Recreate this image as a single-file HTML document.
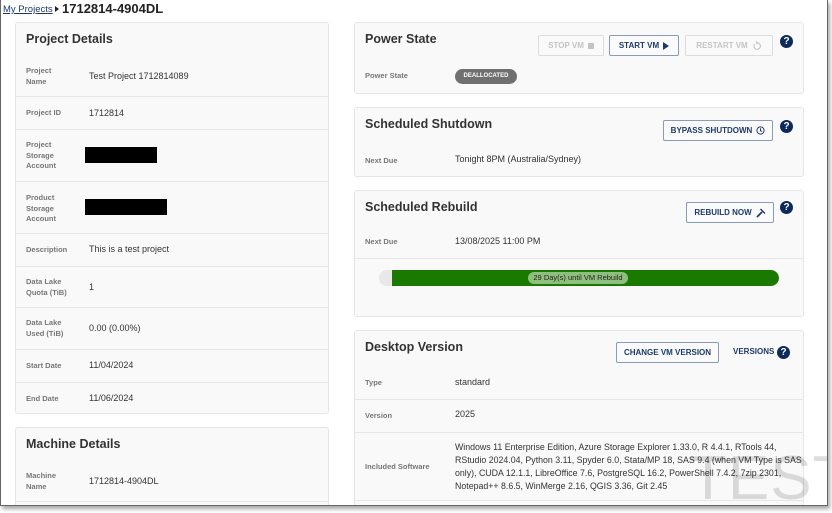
<!DOCTYPE html>
<html><head><meta charset="utf-8"><style>
*{box-sizing:border-box;margin:0;padding:0}
body{width:832px;height:513px;background:#fff;font-family:"Liberation Sans",sans-serif;position:relative;overflow:hidden;color:#222}
.win{position:absolute;left:0;top:0;width:828px;height:506px;border:1px solid #666;border-top:none;background:#fff;box-shadow:2px 3px 4px rgba(0,0,0,.35);overflow:hidden}
.a{position:absolute}
.card{position:absolute;background:#f9f9f9;border:1px solid #e6e6e6;border-radius:3px}
.h{position:absolute;font-size:12.5px;font-weight:bold;color:#333}
.lb{position:absolute;font-size:7.5px;font-weight:bold;color:#777;line-height:10.5px}
.v{position:absolute;font-size:9px;color:#333}
.hr{position:absolute;left:0;right:0;height:1px;background:#e6e6e6}
.btn{position:absolute;border:1px solid #8a9bb5;border-radius:2px;font-size:8px;font-weight:bold;color:#1e3a6b;display:flex;align-items:center;justify-content:center;gap:4px;background:#fafafa}
.dis{border-color:#ddd;color:#c4c4c4}
.q{position:absolute;width:13px;height:13px;border-radius:50%;background:#0d2a5c;color:#fff;font-size:10px;font-weight:bold;text-align:center;line-height:13px}
</style></head><body>
<div class="win">
<div class="a" style="left:2px;top:4px;font-size:9.5px;color:#1e3a6b;text-decoration:underline">My Projects</div>
<div class="a" style="left:54px;top:6px;width:0;height:0;border-left:4px solid #222;border-top:3px solid transparent;border-bottom:3px solid transparent"></div>
<div class="a" style="left:61px;top:1px;font-size:13px;font-weight:bold;color:#222">1712814-4904DL</div>

<div class="card" style="left:14px;top:22px;width:314px;height:392px">
<div class="h" style="left:10px;top:9px">Project Details</div>
<div class="lb" style="left:10px;top:43px">Project<br>Name</div><div class="v" style="left:73px;top:48px">Test Project 1712814089</div>
<div class="hr" style="top:73px"></div>
<div class="lb" style="left:10px;top:85px">Project ID</div><div class="v" style="left:73px;top:85px">1712814</div>
<div class="hr" style="top:106px"></div>
<div class="lb" style="left:10px;top:117px">Project<br>Storage<br>Account</div><div class="a" style="left:69px;top:124px;width:72px;height:16px;background:#000"></div>
<div class="hr" style="top:158px"></div>
<div class="lb" style="left:10px;top:170px">Product<br>Storage<br>Account</div><div class="a" style="left:69px;top:176px;width:82px;height:16px;background:#000"></div>
<div class="hr" style="top:210px"></div>
<div class="lb" style="left:10px;top:222px">Description</div><div class="v" style="left:73px;top:221px">This is a test project</div>
<div class="hr" style="top:243px"></div>
<div class="lb" style="left:10px;top:254px">Data Lake<br>Quota (TiB)</div><div class="v" style="left:73px;top:259px">1</div>
<div class="hr" style="top:284px"></div>
<div class="lb" style="left:10px;top:295px">Data Lake<br>Used (TiB)</div><div class="v" style="left:73px;top:300px">0.00 (0.00%)</div>
<div class="hr" style="top:326px"></div>
<div class="lb" style="left:10px;top:338px">Start Date</div><div class="v" style="left:73px;top:337px">11/04/2024</div>
<div class="hr" style="top:359px"></div>
<div class="lb" style="left:10px;top:371px">End Date</div><div class="v" style="left:73px;top:370px">11/06/2024</div>
</div>

<div class="card" style="left:14px;top:427px;width:314px;height:100px">
<div class="h" style="left:10px;top:9px">Machine Details</div>
<div class="lb" style="left:10px;top:43px">Machine<br>Name</div><div class="v" style="left:73px;top:48px">1712814-4904DL</div>
<div class="hr" style="top:73px"></div>
</div>

<div class="card" style="left:353px;top:22px;width:450px;height:72px">
<div class="h" style="left:10px;top:9px">Power State</div>
<div class="btn dis" style="left:183px;top:12px;width:66px;height:21px">STOP VM <span style="width:6px;height:6px;background:#c4c4c4;display:inline-block"></span></div>
<div class="btn" style="left:254px;top:12px;width:70px;height:21px">START VM <span style="width:0;height:0;border-left:6px solid #1e3a6b;border-top:4px solid transparent;border-bottom:4px solid transparent;display:inline-block"></span></div>
<div class="btn dis" style="left:330px;top:12px;width:88px;height:21px">RESTART VM <svg width="10" height="10" viewBox="0 0 10 10"><path d="M2.5 3A3.3 3.3 0 1 0 5 1.7" fill="none" stroke="#c4c4c4" stroke-width="1.1"/><path d="M4.2 0.3L5.6 1.7L4.2 3.1" fill="none" stroke="#c4c4c4" stroke-width="1.1"/></svg></div>
<div class="q" style="left:425px;top:12px">?</div>
<div class="lb" style="left:10px;top:48px">Power State</div>
<div class="a" style="left:100px;top:46px;width:62px;height:15px;border-radius:8px;background:#707070;color:#fff;font-size:6px;font-weight:bold;text-align:center;line-height:15px">DEALLOCATED</div>
</div>

<div class="card" style="left:353px;top:107px;width:450px;height:70px">
<div class="h" style="left:10px;top:9px">Scheduled Shutdown</div>
<div class="btn" style="left:308px;top:12px;width:110px;height:21px">BYPASS SHUTDOWN <svg width="9" height="9" viewBox="0 0 10 10"><circle cx="5" cy="5" r="4" fill="none" stroke="#1e3a6b" stroke-width="1.1"/><path d="M5 2.5V5.2L6.8 6" fill="none" stroke="#1e3a6b" stroke-width="1.1"/></svg></div>
<div class="q" style="left:425px;top:12px">?</div>
<div class="lb" style="left:10px;top:48px">Next Due</div>
<div class="v" style="left:100px;top:46px">Tonight 8PM (Australia/Sydney)</div>
</div>

<div class="card" style="left:353px;top:190px;width:450px;height:127px">
<div class="h" style="left:10px;top:9px">Scheduled Rebuild</div>
<div class="btn" style="left:331px;top:11px;width:88px;height:21px">REBUILD NOW <svg width="10" height="10" viewBox="0 0 10 10"><path d="M1 9L6 4" stroke="#1e3a6b" stroke-width="1.8"/><path d="M4 1.5L8.5 6L9.5 5L5 0.5Z" fill="#1e3a6b"/></svg></div>
<div class="q" style="left:425px;top:10px">?</div>
<div class="lb" style="left:10px;top:46px">Next Due</div>
<div class="v" style="left:100px;top:45px">13/08/2025 11:00 PM</div>
<div class="hr" style="top:67px"></div>
<div class="a" style="left:24px;top:79px;width:400px;height:16px;border-radius:8px;background:#e8e8e8;overflow:hidden"><div class="a" style="left:13px;top:0;right:0;bottom:0;background:#1a7a00;border-radius:0 8px 8px 0"></div>
<div class="a" style="left:149px;top:2px;width:100px;height:12px;border-radius:6px;background:#8fbf7e;font-size:7.5px;color:#222;text-align:center;line-height:12px">29 Day(s) until VM Rebuild</div></div>
</div>

<div class="card" style="left:353px;top:330px;width:450px;height:200px">
<div class="h" style="left:10px;top:9px">Desktop Version</div>
<div class="btn" style="left:261px;top:11px;width:103px;height:21px">CHANGE VM VERSION</div>
<div class="a" style="left:378px;top:16px;font-size:8px;font-weight:bold;color:#1e3a6b">VERSIONS</div>
<div class="q" style="left:422px;top:15px">?</div>
<div class="lb" style="left:10px;top:47px">Type</div><div class="v" style="left:100px;top:46px">standard</div>
<div class="hr" style="top:68px"></div>
<div class="lb" style="left:10px;top:80px">Version</div><div class="v" style="left:100px;top:78px">2025</div>
<div class="hr" style="top:101px"></div>
<div class="lb" style="left:10px;top:131px">Included Software</div>
<div class="v" style="left:100px;top:110px;width:355px;line-height:13px;font-size:8.8px">Windows 11 Enterprise Edition, Azure Storage Explorer 1.33.0, R 4.4.1, RTools 44,<br>RStudio 2024.04, Python 3.11, Spyder 6.0, Stata/MP 18, SAS 9.4 (when VM Type is SAS<br>only), CUDA 12.1.1, LibreOffice 7.6, PostgreSQL 16.2, PowerShell 7.4.2, 7zip 2301,<br>Notepad++ 8.6.5, WinMerge 2.16, QGIS 3.36, Git 2.45</div>
<div class="hr" style="top:169px"></div>
</div>
<div class="a" style="left:688px;top:443px;font-size:62px;color:rgba(0,0,0,0.13);font-weight:normal;letter-spacing:1px">TEST</div>
</div>
</body></html>
